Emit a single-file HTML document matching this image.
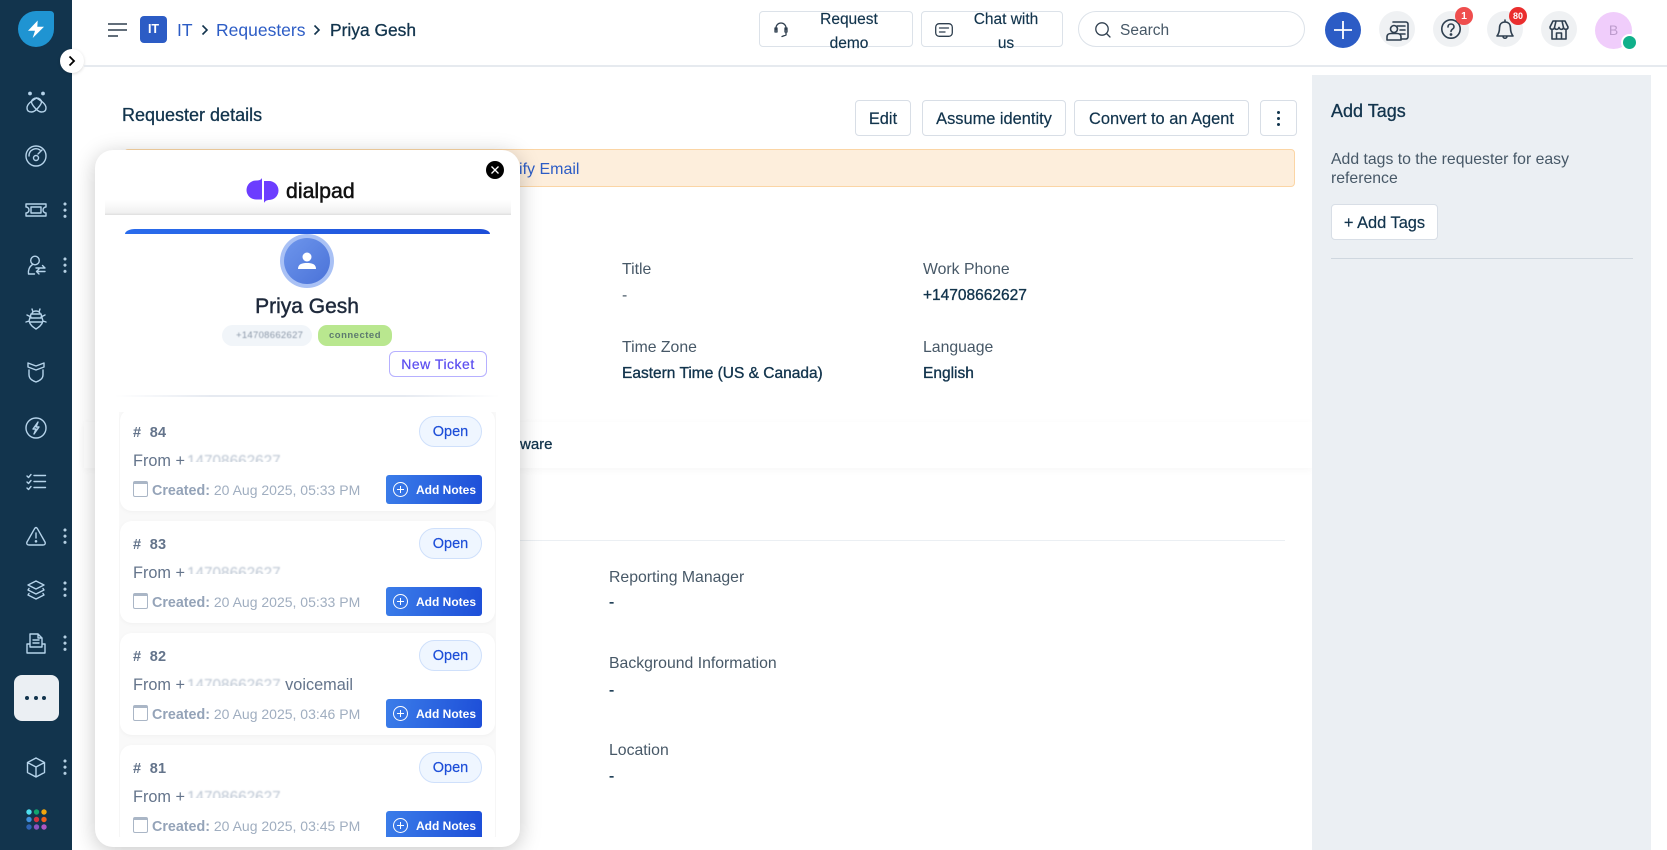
<!DOCTYPE html>
<html lang="en"><head><meta charset="utf-8"><title>Requester details</title>
<style>
*{box-sizing:border-box}
html,body{margin:0;padding:0;width:1667px;height:850px;overflow:hidden}
body{position:relative;background:#fff;font-family:"Liberation Sans",sans-serif;color:#12344d}
.a{position:absolute}
.t{position:absolute;white-space:nowrap;line-height:20px}
.m{-webkit-text-stroke:.3px currentColor}
svg{position:absolute;overflow:visible}
.ic{fill:none;stroke:#b5d3ea;stroke-width:1.4;stroke-linecap:round;stroke-linejoin:round}
.k{position:absolute;left:62.500px;width:4px;height:16px;background:radial-gradient(circle at 2px 2px,#b5d0e3 1.4px,transparent 1.7px) 0 0/4px 6.2px repeat-y}
.btn{position:absolute;border:1px solid #d8dee6;border-radius:4px;background:#fff;text-align:center;font-size:16.400px;color:#12344d;line-height:36px;-webkit-text-stroke:.2px currentColor}
.hc{position:absolute;width:36px;height:36px;border-radius:50%;background:#eff1f3;top:11px}
.hi{fill:none;stroke:#2f3f4f;stroke-width:1.6;stroke-linecap:round;stroke-linejoin:round}
.lab{color:#475867;font-size:15.800px}
.val{color:#12344d;font-size:15.500px;-webkit-text-stroke:.35px currentColor}
.card{position:absolute;left:120px;width:375px;height:102px;background:#fff;border-radius:12px;box-shadow:0 1px 4px rgba(0,0,0,.04)}
.card .h{position:absolute;left:13px;top:14px;line-height:20px;font-size:14.500px;font-weight:bold;color:#64748b;letter-spacing:.3px;word-spacing:4px;white-space:pre}
.card .o{position:absolute;left:299px;top:7px;width:63px;height:31px;border-radius:16px;background:#eff6ff;border:1px solid #cfe0fb;color:#1d4ed8;font-size:14.500px;line-height:31px;text-align:center;-webkit-text-stroke:.2px currentColor}
.card .f{position:absolute;left:13px;top:42px;line-height:20px;font-size:16.300px;color:#64748b;white-space:nowrap}
.card .blur{display:inline-block;color:#bcc6d3;filter:blur(.7px);clip-path:inset(0 0 50% 0);font-size:15.300px;margin-left:2px;margin-right:0}
.card .c{position:absolute;left:32px;top:72px;line-height:18px;font-size:14px;color:#a0aec0;white-space:nowrap}
.card .c b{color:#94a3b8;font-size:14.300px}
.card .cal{position:absolute;left:13px;top:72px;width:15px;height:16px;border:1.5px solid #aab6c6;border-top-width:3px;border-radius:2px}
.card .n{position:absolute;left:266px;top:66px;width:96px;height:29px;border-radius:3px;background:linear-gradient(100deg,#3b7de9,#1d4ed8);color:#fff;font-size:12px;font-weight:bold;line-height:30px;padding-left:30px;white-space:nowrap}
.card .n i{position:absolute;left:7px;top:7px;width:15px;height:15px;border:1px solid #fff;border-radius:50%}
.card .n i:before{content:"";position:absolute;left:3px;top:6px;width:7px;height:1px;background:#fff}
.card .n i:after{content:"";position:absolute;left:6px;top:3px;width:1px;height:7px;background:#fff}
</style></head><body>

<!-- sidebar -->
<div class="a" style="left:0;top:0;width:72px;height:850px;background:#12344d"></div>
<svg style="left:18px;top:11px" width="36" height="36" viewBox="0 0 36 36"><path d="M18 0H32Q36 0 36 4V18A18 18 0 1 1 18 0Z" fill="#1f94d2"/><path d="M19.700 9.500L10 19.700H17L14.700 27L26 15.700H19.300Z" fill="#fff"/></svg>
<div class="a" style="left:60px;top:49px;width:24px;height:24px;border-radius:50%;background:#fff;box-shadow:0 1px 3px rgba(0,0,0,.15)"></div>
<svg style="left:68px;top:55px" width="8" height="12" viewBox="0 0 8 12"><path d="M1.500 1.500L6 6L1.500 10.500" fill="none" stroke="#000" stroke-width="1.800"/></svg>

<svg class="ic" style="left:24px;top:90px" width="24" height="24" viewBox="0 0 24 24"><circle cx="6" cy="3.500" r="1.200" fill="#b5d3ea"/><circle cx="19" cy="3.500" r="1.200" fill="#b5d3ea"/><path d="M12.500 8C7.500 11 3 14 3 18C3 21 5 22 7.500 22C12 22 17.500 14 17.500 12C17.500 10 15.500 8 12.500 8Z"/><path d="M12.500 8C17.500 11 22 14 22 18C22 21 20 22 17.500 22C13 22 7.500 14 7.500 12C7.500 10 9.500 8 12.500 8Z"/></svg>
<svg class="ic" style="left:25px;top:145px" width="22" height="22" viewBox="0 0 22 22"><circle cx="11" cy="11" r="10"/><path d="M4 11A7 7 0 0 1 15 5M13 9L17 5"/><circle cx="11" cy="13" r="2.500"/></svg>
<svg class="ic" style="left:25px;top:203px" width="22" height="14" viewBox="0 0 22 14"><path d="M1 1H21V4A3 3 0 0 0 21 10V13H1V10A3 3 0 0 0 1 4Z"/><rect x="6" y="4" width="10" height="6"/></svg>
<svg class="ic" style="left:27px;top:255px" width="20" height="20" viewBox="0 0 20 20"><circle cx="8" cy="5.500" r="4.300"/><path d="M5.500 9.500C2 12 1 15 1.500 19H7.500M9 13H18M15.500 10.500L18 13M18 16.500H9.500M12 14L9.500 16.500M12 19L9.500 16.500"/></svg>
<svg class="ic" style="left:26px;top:308px" width="20" height="22" viewBox="0 0 20 22"><path d="M6 1L7 4M14 1L13 4M6 6C6 2 14 2 14 6ZM5 6H15L17 13C16 17 13 19 10 21C7 19 4 17 3 13ZM5 9L1 7M15 9L19 7M3 13L0 14M17 13L20 14M5 10H15M4 14H16"/></svg>
<svg class="ic" style="left:27px;top:362px" width="18" height="21" viewBox="0 0 18 21"><path d="M1 1L9 4L17 1V5L9 8L1 5ZM2 8V13C2 17 6 19 9 20C12 19 16 17 16 13V8"/></svg>
<svg class="ic" style="left:25px;top:417px" width="22" height="22" viewBox="0 0 22 22"><circle cx="11" cy="11" r="10"/><path d="M13 5L8 12H11L9 17L14 10H11Z"/></svg>
<svg class="ic" style="left:26px;top:473px" width="20" height="17" viewBox="0 0 20 17"><path d="M1 3L2.500 4.500L5 1.500M1 9L2.500 10.500L5 7.500M1 15L2.500 16.500L5 13.500M8 2.500H19.500M8 8.500H19.500M8 14.500H19.500"/></svg>
<svg class="ic" style="left:26px;top:526px" width="20" height="20" viewBox="0 0 20 20"><path d="M10 1.500C10.500 1.500 11 2 11.500 2.800L19 16C19.800 17.500 19 19 17 19H3C1 19 .2 17.500 1 16L8.500 2.800C9 2 9.500 1.500 10 1.500ZM10 7V12"/><circle cx="10" cy="15.300" r=".6" fill="#b5d3ea"/></svg>
<svg class="ic" style="left:27px;top:580px" width="18" height="20" viewBox="0 0 18 20"><path d="M9 1L17 5L9 9L1 5ZM2 8.500L1 10L9 14L17 10L16 8.500M2 13.500L1 15L9 19L17 15L16 13.500"/></svg>
<svg class="ic" style="left:26px;top:633px" width="20" height="21" viewBox="0 0 20 21"><path d="M4 13V1H12L16 5V13M12 1V5H16M7 7H13M7 10H13M1 11V20H19V11H16V14H4V11Z"/></svg>
<div class="a" style="left:14px;top:675px;width:45px;height:46px;border-radius:8px;background:#ebeff3"></div>
<div class="a" style="left:25px;top:696px;width:4px;height:4px;border-radius:50%;background:#12344d"></div>
<div class="a" style="left:34px;top:696px;width:4px;height:4px;border-radius:50%;background:#12344d"></div>
<div class="a" style="left:42px;top:696px;width:4px;height:4px;border-radius:50%;background:#12344d"></div>
<svg class="ic" style="left:27px;top:757px" width="18" height="21" viewBox="0 0 18 21"><path d="M9 1L17.500 5.500V15.500L9 20L.5 15.500V5.500ZM.5 5.500L9 10L17.500 5.500M9 10V20"/></svg>
<svg style="left:26px;top:809px" width="21" height="21" viewBox="0 0 21 21"><circle cx="3" cy="3" r="2.700" fill="#4fe0f0"/><circle cx="10.500" cy="3" r="2.700" fill="#10a56f"/><circle cx="18" cy="3" r="2.700" fill="#f5a60d"/><circle cx="3" cy="10.500" r="2.700" fill="#3f8fdc"/><circle cx="10.500" cy="10.500" r="2.700" fill="#d2323f"/><circle cx="18" cy="10.500" r="2.700" fill="#f0601c"/><circle cx="3" cy="18" r="2.700" fill="#2f63b5"/><circle cx="10.500" cy="18" r="2.700" fill="#8b53bf"/><circle cx="18" cy="18" r="2.700" fill="#ae57c2"/></svg>
<div class="k" style="top:202px"></div><div class="k" style="top:257px"></div><div class="k" style="top:528px"></div><div class="k" style="top:581px"></div><div class="k" style="top:635px"></div><div class="k" style="top:759px"></div>

<!-- header -->
<div class="a" style="left:84px;top:65px;width:1583px;height:1.500px;background:#e6eaef"></div>
<svg style="left:108px;top:23px" width="19" height="14" viewBox="0 0 19 14"><path d="M0 1H19M0 7H19M0 13H10" stroke="#2f3f4f" stroke-width="1.600"/></svg>
<div class="a" style="left:140px;top:16px;width:27px;height:27px;border-radius:4px;background:#2c5cc5;color:#fff;font-size:12.500px;font-weight:bold;text-align:center;line-height:27px">IT</div>
<div class="t" style="left:177px;top:20px;font-size:17.500px;color:#2c5cc5">IT</div>
<svg style="left:201px;top:24px" width="8" height="12" viewBox="0 0 8 12"><path d="M1.500 1.500L6 6L1.500 10.500" fill="none" stroke="#12344d" stroke-width="1.600"/></svg>
<div class="t" style="left:216px;top:20px;font-size:17.500px;color:#2c5cc5">Requesters</div>
<svg style="left:313px;top:24px" width="8" height="12" viewBox="0 0 8 12"><path d="M1.500 1.500L6 6L1.500 10.500" fill="none" stroke="#12344d" stroke-width="1.600"/></svg>
<div class="t m" style="left:330px;top:20px;font-size:17.400px;color:#12344d">Priya Gesh</div>

<div class="a" style="left:759px;top:11px;width:154px;height:36px;border:1px solid #dce2e9;border-radius:4px"></div>
<svg class="hi" style="left:773px;top:22px;stroke-width:1.300" width="16" height="16" viewBox="0 0 16 16"><path d="M3 8V6A5 5 0 0 1 13 6V8M3 6H2V10H4V6ZM12 6H14V10H12ZM13 10V13L9 14.500"/></svg>
<div class="t" style="left:799px;top:9.500px;width:100px;text-align:center;font-size:15.500px;color:#12344d;-webkit-text-stroke:.15px">Request</div>
<div class="t" style="left:799px;top:34px;width:100px;text-align:center;font-size:15.500px;color:#12344d;-webkit-text-stroke:.15px">demo</div>
<div class="a" style="left:921px;top:11px;width:142px;height:36px;border:1px solid #dce2e9;border-radius:4px"></div>
<svg class="hi" style="left:935px;top:23px;stroke-width:1.300" width="18" height="14" viewBox="0 0 18 14"><rect x=".7" y=".7" width="16.600" height="12.600" rx="3.500"/><path d="M4.500 5H13.500M4.500 9H10"/></svg>
<div class="t" style="left:956px;top:9.500px;width:100px;text-align:center;font-size:15.500px;color:#12344d;-webkit-text-stroke:.15px">Chat with</div>
<div class="t" style="left:956px;top:34px;width:100px;text-align:center;font-size:15.500px;color:#12344d;-webkit-text-stroke:.15px">us</div>
<div class="a" style="left:1078px;top:11px;width:227px;height:36px;border:1px solid #dce2e9;border-radius:18px"></div>
<svg class="hi" style="left:1095px;top:22px;stroke-width:1.300" width="16" height="16" viewBox="0 0 16 16"><circle cx="7" cy="7" r="6.200"/><path d="M11.500 11.500L15 15"/></svg>
<div class="t" style="left:1120px;top:21px;font-size:15.500px;color:#475867">Search</div>

<div class="a" style="left:1325px;top:11.500px;width:36px;height:36px;border-radius:50%;background:#2c5cc5"></div>
<svg style="left:1334px;top:20.500px" width="18" height="18" viewBox="0 0 18 18"><path d="M9 0V18M0 9H18" stroke="#fff" stroke-width="1.800"/></svg>
<div class="hc" style="left:1379px"></div>
<svg class="hi" style="left:1386px;top:20px" width="23" height="21" viewBox="0 0 23 21"><path d="M7 2H20C21 2 22 3 22 4V17C22 18 21 19 20 19H16M11 6H19M14 10H19M14 14H19"/><circle cx="8" cy="9" r="3.500"/><path d="M1 20V17C1 14.500 3 13.500 5 13.500H11C13 13.500 15 14.500 15 17V20Z"/></svg>
<div class="hc" style="left:1433px"></div>
<svg class="hi" style="left:1441px;top:19px" width="20" height="20" viewBox="0 0 20 20"><circle cx="10" cy="10" r="9.200"/><path d="M7 8C7 4 13 4 13 8C13 10 10 10 10 12.500"/><circle cx="10" cy="15.500" r=".6" fill="#2f3f4f"/></svg>
<div class="a" style="left:1455px;top:7px;width:18px;height:18px;border-radius:50%;background:#ef4e4e;color:#fff;font-size:10.500px;font-weight:bold;text-align:center;line-height:18px">1</div>
<div class="hc" style="left:1487px"></div>
<svg class="hi" style="left:1496px;top:19px" width="18" height="21" viewBox="0 0 18 21"><path d="M9 1V3M9 3C5 3 3.500 6 3.500 9C3.500 13 2.500 15 1 17H17C15.500 15 14.500 13 14.500 9C14.500 6 13 3 9 3ZM7 17C7 20 11 20 11 17"/></svg>
<div class="a" style="left:1509px;top:7px;width:18px;height:18px;border-radius:50%;background:#ea2e2e;color:#fff;font-size:9px;font-weight:bold;text-align:center;line-height:18px">80</div>
<div class="hc" style="left:1541px"></div>
<svg class="hi" style="left:1549px;top:20px" width="20" height="20" viewBox="0 0 20 20"><path d="M4 1H16L19 7C19 10 15 10 14.500 7.500C14 10 11 10 10 7.500C9 10 6 10 5.500 7.500C5 10 1 10 1 7ZM7 1L5.500 7.500M13 1L14.500 7.500M3 10V19H17V10M7.500 19V13H12.500V19"/></svg>
<div class="a" style="left:1595px;top:12px;width:37px;height:37px;border-radius:50%;background:#f0cdfb;color:#bd9ccd;font-size:14px;text-align:center;line-height:37px">B</div>
<div class="a" style="left:1621px;top:34px;width:17px;height:17px;border-radius:50%;background:#10b08a;border:2.500px solid #fff"></div>

<!-- main -->
<div class="t m" style="left:122px;top:105px;font-size:18px;color:#12344d">Requester details</div>
<div class="btn" style="left:855px;top:100px;width:56px;height:36px">Edit</div>
<div class="btn" style="left:922px;top:100px;width:144px;height:36px">Assume identity</div>
<div class="btn" style="left:1074px;top:100px;width:175px;height:36px">Convert to an Agent</div>
<div class="btn" style="left:1260px;top:100px;width:37px;height:36px"></div>
<div class="a" style="left:1277px;top:111px;width:3px;height:3px;border-radius:50%;background:#12344d"></div>
<div class="a" style="left:1277px;top:117px;width:3px;height:3px;border-radius:50%;background:#12344d"></div>
<div class="a" style="left:1277px;top:123px;width:3px;height:3px;border-radius:50%;background:#12344d"></div>
<div class="a" style="left:124px;top:149px;width:1171px;height:38px;background:#fdeedc;border:1px solid #fbd5a5;border-radius:4px"></div>
<div class="t" style="left:495px;top:160px;font-size:16px;color:#2c5cc5">Verify Email</div>

<div class="t lab" style="left:622px;top:260px">Title</div>
<div class="t lab" style="left:622px;top:286px">-</div>
<div class="t lab" style="left:923px;top:260px">Work Phone</div>
<div class="t val" style="left:923px;top:286px">+14708662627</div>
<div class="t lab" style="left:622px;top:338px">Time Zone</div>
<div class="t val" style="left:622px;top:364px">Eastern Time (US &amp; Canada)</div>
<div class="t lab" style="left:923px;top:338px">Language</div>
<div class="t val" style="left:923px;top:364px">English</div>

<div class="a" style="left:84px;top:422px;width:1228px;height:46px;background:#fff;box-shadow:0 2px 8px rgba(0,0,0,.035)"></div>
<div class="t m" style="left:520px;top:435px;font-size:15px;color:#12344d">ware</div>
<div class="a" style="left:124px;top:540px;width:1161px;height:1px;background:#ebeff3"></div>
<div class="t lab" style="left:609px;top:568px">Reporting Manager</div>
<div class="t val" style="left:609px;top:593px">-</div>
<div class="t lab" style="left:609px;top:654px">Background Information</div>
<div class="t val" style="left:609px;top:681px">-</div>
<div class="t lab" style="left:609px;top:741px">Location</div>
<div class="t val" style="left:609px;top:767px">-</div>

<!-- right panel -->
<div class="a" style="left:1312px;top:75px;width:339px;height:775px;background:#ebeff3"></div>
<div class="t m" style="left:1331px;top:101px;font-size:18px;color:#12344d">Add Tags</div>
<div class="t" style="left:1331px;top:150px;font-size:15.800px;color:#475867">Add tags to the requester for easy</div>
<div class="t" style="left:1331px;top:169px;font-size:15.800px;color:#475867">reference</div>
<div class="btn" style="left:1331px;top:204px;width:107px;height:36px">+ Add Tags</div>
<div class="a" style="left:1331px;top:258px;width:302px;height:1px;background:#cfd7df"></div>

<!-- popup -->
<div class="a" style="left:95px;top:150px;width:425px;height:697px;background:#fff;border-radius:18px;box-shadow:0 4px 22px rgba(0,0,0,.22);overflow:hidden"></div>
<div class="a" style="left:105px;top:190px;width:406px;height:25px;background:linear-gradient(#fff 0%,#fff 40%,#f1f1f1 90%,#dedede 100%)"></div>
<div class="a" style="left:486px;top:161px;width:18px;height:18px;border-radius:50%;background:#000"></div>
<svg style="left:491px;top:166px" width="8" height="8" viewBox="0 0 8 8"><path d="M.5 .5L7.500 7.500M7.500 .5L.5 7.500" stroke="#fff" stroke-width="1.300"/></svg>
<svg style="left:246px;top:178px" width="33" height="25" viewBox="0 0 33 25"><path d="M16 0V21.500H10A9.500 9.500 0 0 1 10 2.500C13 2.500 15 2 16 0Z" fill="#6c3dff"/><path d="M18 25V3H23A9.500 9.500 0 0 1 23 22C21 22 19 23 18 25Z" fill="#6c3dff"/></svg>
<div class="t" style="left:286px;top:181px;font-size:21.300px;color:#111;-webkit-text-stroke:.5px #111">dialpad</div>
<div class="a" style="left:125px;top:229px;width:365px;height:5px;border-radius:10px 10px 0 0/5px 5px 0 0;background:linear-gradient(90deg,#2a6cec,#1d4ed8)"></div>
<div class="a" style="left:280px;top:234px;width:54px;height:54px;border-radius:50%;background:#a9c1f5"></div>
<div class="a" style="left:284px;top:238px;width:46px;height:46px;border-radius:50%;background:linear-gradient(135deg,#6e96ec,#4a72d8)"></div>
<svg style="left:298px;top:252px" width="18" height="18" viewBox="0 0 18 18"><circle cx="9" cy="5" r="4.500" fill="#fff"/><path d="M0 17C0 12 4 11 9 11C14 11 18 12 18 17Z" fill="#fff"/></svg>
<div class="t" style="left:207px;top:297px;width:200px;text-align:center;font-size:21px;color:#1e293b;-webkit-text-stroke:.45px #1e293b">Priya Gesh</div>
<div class="a" style="left:222px;top:325px;width:90px;height:21px;border-radius:11px;background:#f1f5f9"></div>
<div class="t" style="left:236px;top:325px;font-size:9.500px;line-height:21px;color:#8a97a8;letter-spacing:.3px;filter:blur(.4px)">+14708662627</div>
<div class="a" style="left:318px;top:325px;width:74px;height:21px;border-radius:9px;background:#b9e78f;color:#5d7a6e;font-size:9.500px;font-weight:bold;text-align:center;line-height:21px;letter-spacing:.5px">connected</div>
<div class="a" style="left:389px;top:351px;width:98px;height:26px;border:1px solid #b6b0ff;border-radius:6px;color:#5b4df0;font-size:14px;text-align:center;line-height:24px;letter-spacing:.5px;-webkit-text-stroke:.2px currentColor">New Ticket</div>
<div class="a" style="left:115px;top:395px;width:385px;height:2px;background:linear-gradient(90deg,transparent,#e6eaf1 25%,#e6eaf1 75%,transparent)"></div>

<div class="a" style="left:119px;top:412px;width:377px;height:425px;background:#f9f9f9;overflow:hidden">
<div style="position:absolute;left:-119px;top:-412px;width:497px;height:849px">
<div class="card" style="top:409px"><span class="h"># 84</span><span class="o">Open</span><span class="f">From +<span class="blur">14708662627</span></span><span class="cal"></span><span class="c"><b>Created:</b> 20 Aug 2025, 05:33 PM</span><span class="n"><i></i>Add Notes</span></div>
<div class="card" style="top:521px"><span class="h"># 83</span><span class="o">Open</span><span class="f">From +<span class="blur">14708662627</span></span><span class="cal"></span><span class="c"><b>Created:</b> 20 Aug 2025, 05:33 PM</span><span class="n"><i></i>Add Notes</span></div>
<div class="card" style="top:633px"><span class="h"># 82</span><span class="o">Open</span><span class="f">From +<span class="blur">14708662627</span> voicemail</span><span class="cal"></span><span class="c"><b>Created:</b> 20 Aug 2025, 03:46 PM</span><span class="n"><i></i>Add Notes</span></div>
<div class="card" style="top:745px"><span class="h"># 81</span><span class="o">Open</span><span class="f">From +<span class="blur">14708662627</span></span><span class="cal"></span><span class="c"><b>Created:</b> 20 Aug 2025, 03:45 PM</span><span class="n"><i></i>Add Notes</span></div>
</div></div>

</body></html>
